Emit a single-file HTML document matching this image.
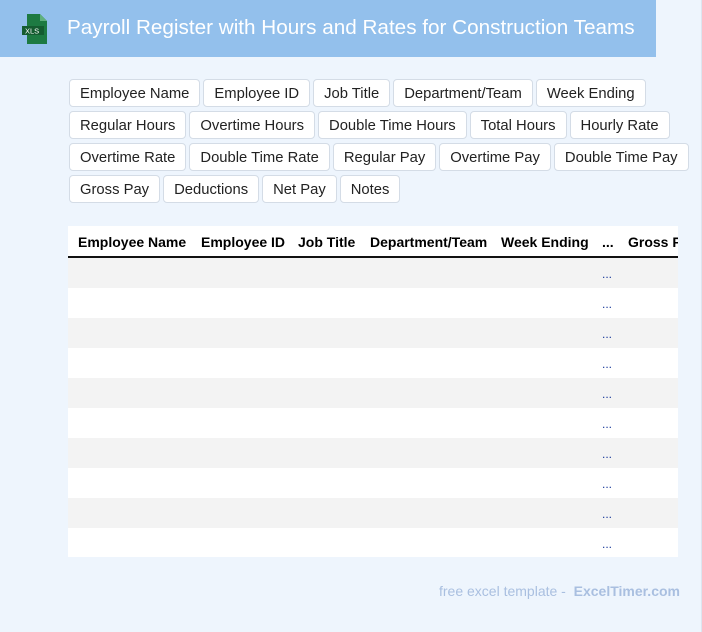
<!DOCTYPE html><html><head><style>
body{margin:0;width:702px;height:632px;background:#eef5fd;font-family:"Liberation Sans",Arial,sans-serif;position:relative;overflow:hidden;border-right:1px solid #dde6f0;box-sizing:border-box}
.hdr{position:absolute;left:0;top:0;width:656px;height:57px;background:#93c0ec}
.hdr h1{position:absolute;left:67px;top:16px;margin:0;font-size:20.7px;font-weight:normal;color:#fff;white-space:nowrap}
.tags{position:absolute;left:69px;top:79px;width:625px;display:flex;flex-wrap:wrap;gap:4px 3px}
.tags span{display:inline-block;height:28px;line-height:28px;padding:0 10px;background:#fff;border:1px solid #d4dce6;border-radius:4px;font-size:14.8px;color:#222;box-sizing:border-box}
.tbl{position:absolute;left:68px;top:226px;width:610px;height:331px;background:#fff;overflow:hidden}
.th{height:30px;border-bottom:2px solid #111;font-weight:bold;font-size:14px;white-space:nowrap;position:relative}
.th span{position:absolute;top:8px}
.row{height:30px;position:relative}
.row i{position:absolute;left:534px;top:9px;font-style:normal;color:#1a3a9a;font-size:12px}
.foot{position:absolute;right:21px;top:583px;font-size:14px;color:#a9bfe0}
</style></head><body>
<div class="hdr">
<svg style="position:absolute;left:22px;top:14px" width="28" height="30" viewBox="0 0 28 30"><path d="M5 0h13l7 7v23H5z" fill="#1d7a42"/><path d="M18 0v7h7z" fill="#5fb07d"/><rect x="0" y="12" width="22" height="9" fill="#145c30"/><text x="3" y="19.5" font-size="7.5" fill="#fff" font-family="Liberation Sans">XLS</text></svg>
<h1>Payroll Register with Hours and Rates for Construction Teams</h1></div>
<div class="tags"><span>Employee Name</span><span>Employee ID</span><span>Job Title</span><span>Department/Team</span><span>Week Ending</span><span>Regular Hours</span><span>Overtime Hours</span><span>Double Time Hours</span><span>Total Hours</span><span>Hourly Rate</span><span>Overtime Rate</span><span>Double Time Rate</span><span>Regular Pay</span><span>Overtime Pay</span><span>Double Time Pay</span><span>Gross Pay</span><span>Deductions</span><span>Net Pay</span><span>Notes</span></div>
<div class="tbl"><div class="th"><span style="left:10px">Employee Name</span><span style="left:133px">Employee ID</span><span style="left:230px">Job Title</span><span style="left:302px">Department/Team</span><span style="left:433px">Week Ending</span><span style="left:534px">...</span><span style="left:560px">Gross Pay</span></div>
<div><div class="row" style="background:#f3f3f3"><i>...</i></div><div class="row" style="background:#fff"><i>...</i></div><div class="row" style="background:#f3f3f3"><i>...</i></div><div class="row" style="background:#fff"><i>...</i></div><div class="row" style="background:#f3f3f3"><i>...</i></div><div class="row" style="background:#fff"><i>...</i></div><div class="row" style="background:#f3f3f3"><i>...</i></div><div class="row" style="background:#fff"><i>...</i></div><div class="row" style="background:#f3f3f3"><i>...</i></div><div class="row" style="background:#fff"><i>...</i></div></div></div>
<div class="foot">free excel template - &nbsp;<b>ExcelTimer.com</b></div>
</body></html>
